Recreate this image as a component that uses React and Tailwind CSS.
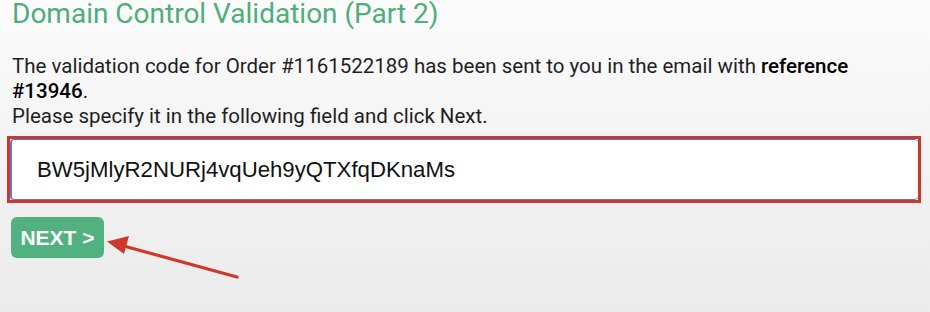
export default function App() {
  return (
    <div className="relative w-[930px] h-[312px] overflow-hidden bg-gradient-to-b from-[#fbfbfb] to-[#ebebeb] font-['Roboto',sans-serif]">
      <div className="px-[12px]">
        <h1 className="text-[28px] leading-[28px] text-[#4dae7c] font-normal">Domain Control Validation (Part 2)</h1>

        <p className="mt-[26px] max-w-[860px] text-[20.5px] leading-[25px] text-[#1f1f1f]">
          The validation code for Order #1161522189 has been sent to you in the email with{' '}
          <span className="font-medium text-black">reference #13946</span>.
          <br />
          Please specify it in the following field and click Next.
        </p>
      </div>

      <div className="ml-[7px] mt-[7px] w-[914px] h-[67px] border-[3px] border-[#c23b2e] bg-white">
        <div className="h-full rounded-[4px] border-l-2 border-t border-b border-[#6d6fd8] flex items-center pl-[25px]">
          <span className="text-[22.2px] text-[#111] font-['Liberation_Sans',Arial,sans-serif]">
            BW5jMlyR2NURj4vqUeh9yQTXfqDKnaMs
          </span>
        </div>
      </div>

      <button
        type="button"
        className="ml-[11px] mt-[14px] w-[93px] h-[41px] rounded-[6px] bg-[#52b27f] text-white font-bold text-[21px] font-['Liberation_Sans',Arial,sans-serif] flex items-center justify-center"
      >
        NEXT &gt;
      </button>

      {/* annotation arrow */}
      <svg className="absolute left-0 top-0 pointer-events-none" width="930" height="312" viewBox="0 0 930 312">
        <line x1="237" y1="277" x2="122" y2="245.5" stroke="#cd3a2b" strokeWidth="3.2" strokeLinecap="round" />
        <polygon points="107,241.5 129,236 124,254" fill="#cd3a2b" />
      </svg>
    </div>
  );
}
